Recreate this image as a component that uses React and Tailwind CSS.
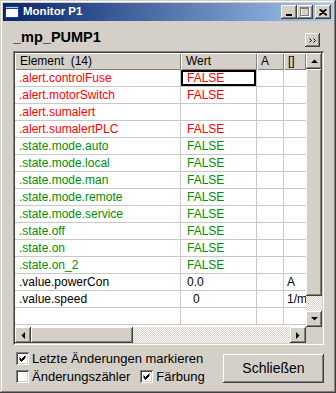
import React from "react";

const raised =
  "bg-[#d4d0c8] shadow-[inset_-1px_-1px_#404040,inset_1px_1px_#ffffff,inset_-2px_-2px_#808080,inset_2px_2px_#d4d0c8]";
const sunken =
  "shadow-[inset_1px_1px_#808080,inset_-1px_-1px_#ffffff,inset_2px_2px_#404040,inset_-2px_-2px_#d4d0c8]";
const dither =
  "bg-[image:repeating-conic-gradient(#d4d0c8_0_25%,#ffffff_0_50%)] bg-[length:2px_2px]";

const rows = [
  { name: ".alert.controlFuse", val: "FALSE", color: "text-[#ff0000]", sel: true },
  { name: ".alert.motorSwitch", val: "FALSE", color: "text-[#ff0000]" },
  { name: ".alert.sumalert", val: "", color: "text-[#ff0000]" },
  { name: ".alert.sumalertPLC", val: "FALSE", color: "text-[#ff0000]" },
  { name: ".state.mode.auto", val: "FALSE", color: "text-[#009000]" },
  { name: ".state.mode.local", val: "FALSE", color: "text-[#009000]" },
  { name: ".state.mode.man", val: "FALSE", color: "text-[#009000]" },
  { name: ".state.mode.remote", val: "FALSE", color: "text-[#009000]" },
  { name: ".state.mode.service", val: "FALSE", color: "text-[#009000]" },
  { name: ".state.off", val: "FALSE", color: "text-[#009000]" },
  { name: ".state.on", val: "FALSE", color: "text-[#009000]" },
  { name: ".state.on_2", val: "FALSE", color: "text-[#009000]" },
  { name: ".value.powerCon", val: "0.0", color: "text-black", unit: "A" },
  { name: ".value.speed", val: "0", color: "text-black", unit: "1/m", pad: true },
  { name: "", val: "", color: "text-black" },
];

function Arrow({ dir }) {
  const pts = {
    up: "0,4 7,4 3.5,0.5",
    down: "0,0 7,0 3.5,3.5",
    left: "4,0 4,7 0.5,3.5",
    right: "0,0 0,7 3.5,3.5",
  }[dir];
  const vertical = dir === "up" || dir === "down";
  return (
    <svg width={vertical ? 7 : 4} height={vertical ? 4 : 7}>
      <polygon points={pts} fill="#000" />
    </svg>
  );
}

function ScrollBtn({ dir }) {
  return (
    <div className={`w-[16px] h-[16px] shrink-0 flex items-center justify-center ${raised}`}>
      <Arrow dir={dir} />
    </div>
  );
}

function Check({ checked }) {
  return (
    <div className={`w-[13px] h-[13px] shrink-0 bg-white p-[2px] ${sunken}`}>
      {checked && (
        <svg width="9" height="9">
          <path d="M1.5 3.5 L3.5 5.5 L7.5 1.5 M1.5 4.5 L3.5 6.5 L7.5 2.5 M1.5 5.5 L3.5 7.5 L7.5 3.5" stroke="#000" strokeWidth="1" fill="none" />
        </svg>
      )}
    </div>
  );
}

function TitleBtn({ children }) {
  return (
    <div className={`w-[16px] h-[14px] flex items-center justify-center ${raised}`}>{children}</div>
  );
}

export default function App() {
  return (
    <div className="w-[336px] h-[393px] bg-[#d4d0c8] p-[3px] flex flex-col shadow-[inset_-1px_-1px_#404040,inset_1px_1px_#d4d0c8,inset_-2px_-2px_#808080,inset_2px_2px_#ffffff] font-['Liberation_Sans',Arial,sans-serif] text-black">
      {/* title bar */}
      <div className="h-[18px] shrink-0 flex items-center bg-linear-to-r from-[#0a246a] to-[#a6caf0] pl-[2px] pr-[2px]">
        <svg width="14" height="12" className="shrink-0">
          <rect x="0" y="0" width="14" height="12" fill="#1c3c98" />
          <rect x="1" y="3" width="12" height="8" fill="#ffffff" />
          <rect x="1" y="1" width="12" height="1" fill="#a6caf0" />
        </svg>
        <span className="ml-[4px] text-white font-bold text-[11.5px] leading-none">Monitor P1</span>
        <div className="ml-auto flex">
          <TitleBtn>
            <svg width="8" height="7">
              <rect x="1" y="5" width="6" height="2" fill="#000" />
            </svg>
          </TitleBtn>
          <TitleBtn>
            <svg width="10" height="10">
              <rect x="1.5" y="1.5" width="8" height="8" fill="none" stroke="#ffffff" />
              <rect x="0.5" y="0.5" width="8" height="8" fill="none" stroke="#808080" />
              <rect x="0" y="1" width="9" height="1" fill="#808080" />
            </svg>
          </TitleBtn>
          <div className="ml-[2px]">
            <TitleBtn>
              <svg width="8" height="7">
                <path d="M0.5 0.5 L7.5 6.5 M1.5 0.5 L8 6 M7.5 0.5 L0.5 6.5 M6.5 0.5 L0 6" stroke="#000" strokeWidth="1.2" fill="none" />
              </svg>
            </TitleBtn>
          </div>
        </div>
      </div>

      {/* body */}
      <div className="flex-1 flex flex-col pl-[10px] pr-[9px]">
        <div className="h-[30px] flex justify-between items-start">
          <div className="pt-[7px] text-[14.5px] leading-[18px] font-bold">_mp_PUMP1</div>
          <div className={`mt-[12px] mr-[4px] w-[15px] h-[14px] flex items-center justify-center ${raised}`}>
            <svg width="8" height="5">
              <path d="M0.5 0.5 L2.5 2.5 L0.5 4.5 M4.5 0.5 L6.5 2.5 L4.5 4.5" stroke="#000" strokeWidth="1" fill="none" />
            </svg>
          </div>
        </div>

        {/* grid */}
        <div className={`w-[311px] h-[294px] p-[2px] bg-white ${sunken} flex flex-col`}>
          <div className="flex h-[274px]">
            <div className="w-[291px] overflow-hidden text-[12px] bg-white">
              <div className="flex h-[17px] leading-[16px]">
                <div className="w-[166px] shrink-0 pl-[5px] bg-[#d4d0c8] whitespace-pre shadow-[inset_1px_1px_#ffffff,inset_-1px_-1px_#808080]">
                  Element  (14)
                </div>
                <div className="w-[76px] shrink-0 pl-[5px] bg-[#d4d0c8] shadow-[inset_1px_1px_#ffffff,inset_-1px_-1px_#808080]">Wert</div>
                <div className="w-[27px] shrink-0 pl-[4px] bg-[#d4d0c8] shadow-[inset_1px_1px_#ffffff,inset_-1px_-1px_#808080]">A</div>
                <div className="w-[22px] shrink-0 pl-[4px] bg-[#d4d0c8] shadow-[inset_1px_1px_#ffffff,inset_-1px_-1px_#808080]">[]</div>
              </div>
              {rows.map((r, i) => (
                <div key={i} className={`flex h-[17px] leading-[16px] ${r.color}`}>
                  <div className="w-[166px] shrink-0 pl-[4px] border-r border-b border-[#c8c8c8] whitespace-nowrap overflow-hidden">
                    {r.name}
                  </div>
                  <div
                    className={`w-[76px] shrink-0 border-r border-b border-[#c8c8c8] ${r.pad ? "pl-[12px]" : "pl-[6px]"} ${
                      r.sel ? "shadow-[inset_0_0_0_2px_#000000]" : ""
                    }`}
                  >
                    {r.val}
                  </div>
                  <div className="w-[27px] shrink-0 border-r border-b border-[#c8c8c8]" />
                  <div className="w-[22px] shrink-0 pl-[3px] border-b border-[#c8c8c8] whitespace-nowrap overflow-hidden">
                    {r.unit}
                  </div>
                </div>
              ))}
            </div>
            <div className="w-[16px] flex flex-col">
              <ScrollBtn dir="up" />
              <div className={`h-[227px] ${raised}`} />
              <div className={`flex-1 ${dither}`} />
              <ScrollBtn dir="down" />
            </div>
          </div>
          <div className="flex h-[16px]">
            <div className="w-[291px] flex">
              <ScrollBtn dir="left" />
              <div className={`w-[102px] ${raised}`} />
              <div className={`flex-1 ${dither}`} />
              <ScrollBtn dir="right" />
            </div>
            <div className="w-[16px] bg-[#d4d0c8]" />
          </div>
        </div>

        {/* bottom */}
        <div className="flex justify-between text-[13px] leading-[15px]">
          <div className="pl-[3px] pt-[6px] flex flex-col gap-[3px]">
            <div className="flex items-center gap-[3px]">
              <Check checked />
              <span>Letzte Änderungen markieren</span>
            </div>
            <div className="flex items-center gap-[3px]">
              <Check />
              <span>Änderungszähler</span>
              <div className="ml-[7px] flex items-center gap-[3px]">
                <Check checked />
                <span>Färbung</span>
              </div>
            </div>
          </div>
          <div className={`mt-[9px] w-[101px] h-[29px] flex items-center justify-center text-[14px] ${raised}`}>
            Schließen
          </div>
        </div>
      </div>
    </div>
  );
}
